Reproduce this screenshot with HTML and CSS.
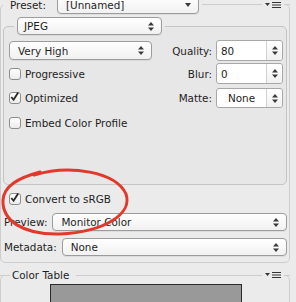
FILE: index.html
```html
<!DOCTYPE html>
<html lang="en">
<head>
<meta charset="UTF-8">
<meta name="viewport" content="width=device-width, initial-scale=1.0">
<title>Save for Web</title>
<link rel="stylesheet" href="styles.css">
</head>
<body>

<fieldset class="panel">
<legend class="bar">
<span class="label preset-label">Preset:</span>
<div class="select preset-select"><span>[Unnamed]</span>
<svg class="arrow" width="6" height="4" viewBox="0 0 6 4"><path d="M0 0h6L3 4z"/></svg>
</div>
<span class="rule"></span>
<svg class="menu" width="16" height="8" viewBox="0 0 16 8"><path d="M0 2h5L2.5 5z"/><path d="M7 1.5h9M7 4h9M7 6.5h9" stroke="#333" stroke-width="1.2"/></svg>
<span class="rule end"></span>
</legend>

<fieldset class="group">
<legend class="group-legend">
<div class="select format"><span>JPEG</span>
<svg class="updown" width="6" height="9" viewBox="0 0 6 9"><path d="M0 3.5h6L3 0zM0 5.5h6L3 9z"/></svg>
</div>
</legend>

<div class="options">
<div class="select quality-select"><span>Very High</span>
<svg class="updown" width="6" height="9" viewBox="0 0 6 9"><path d="M0 3.5h6L3 0zM0 5.5h6L3 9z"/></svg>
</div>
<span class="field-label">Quality:</span>
<div class="combo"><span class="val">80</span><span class="step"><svg class="updown" width="6" height="9" viewBox="0 0 6 9"><path d="M0 3.5h6L3 0zM0 5.5h6L3 9z"/></svg></span></div>

<label class="check-row"><span class="box"></span>Progressive</label>
<span class="field-label">Blur:</span>
<div class="combo"><span class="val">0</span><span class="step"><svg class="updown" width="6" height="9" viewBox="0 0 6 9"><path d="M0 3.5h6L3 0zM0 5.5h6L3 9z"/></svg></span></div>

<label class="check-row"><span class="box on"><svg width="12" height="12" viewBox="0 0 12 12"><path d="M2.5 6l2.5 3 5-8" fill="none" stroke="#2a2a2a" stroke-width="2"/></svg></span>Optimized</label>
<span class="field-label">Matte:</span>
<div class="combo matte"><span class="val">None</span><span class="step"><svg class="updown" width="6" height="9" viewBox="0 0 6 9"><path d="M0 3.5h6L3 0zM0 5.5h6L3 9z"/></svg></span></div>

<label class="check-row"><span class="box"></span>Embed Color Profile</label>
</div>
</fieldset>

<label class="check-row convert"><span class="box on"><svg width="12" height="12" viewBox="0 0 12 12"><path d="M2.5 6l2.5 3 5-8" fill="none" stroke="#2a2a2a" stroke-width="2"/></svg></span>Convert to sRGB</label>

<div class="line-row">
<span class="label">Preview:</span>
<div class="select wide"><span>Monitor Color</span>
<svg class="updown" width="6" height="9" viewBox="0 0 6 9"><path d="M0 3.5h6L3 0zM0 5.5h6L3 9z"/></svg>
</div>
</div>

<div class="line-row">
<span class="label">Metadata:</span>
<div class="select wide"><span>None</span>
<svg class="updown" width="6" height="9" viewBox="0 0 6 9"><path d="M0 3.5h6L3 0zM0 5.5h6L3 9z"/></svg>
</div>
</div>
</fieldset>

<fieldset class="panel table-panel">
<legend class="bar table-bar">
<span class="rule start"></span>
<span class="label table-title">Color Table</span>
<span class="rule"></span>
<svg class="menu" width="16" height="8" viewBox="0 0 16 8"><path d="M0 2h5L2.5 5z"/><path d="M7 1.5h9M7 4h9M7 6.5h9" stroke="#333" stroke-width="1.2"/></svg>
<span class="rule end"></span>
</legend>
<div class="swatch"></div>
</fieldset>

<svg class="circle" width="296" height="302" viewBox="0 0 296 302">
<path d="M34 175 C70 164 116 172 126 194 C133 214 104 232 60 234 C22 235 2 220 3 200 C4 186 18 178 40 172" fill="none" stroke="#e2392c" stroke-width="3" stroke-linecap="round"/>
</svg>

</body>
</html>
```

FILE: styles.css
```css
body {
    margin: 0;
    width: 296px;
    height: 302px;
    overflow: hidden;
    position: relative;
    background-color: #ebebeb;
    font-family: "DejaVu Sans", Verdana, sans-serif;
    font-size: 10.4px;
    color: #1e1e1e;
}

.panel {
    margin: -5px 6px 0 0;
    padding: 0 2px 6px 2px;
    border: 1px solid #cdcdcd;
    border-radius: 5px;
}

.bar {
    display: flex;
    align-items: center;
    width: 100%;
    box-sizing: border-box;
    padding: 0;
    height: 19px;
}

.rule {
    flex: 1;
    height: 0;
    border-top: 1px solid #cdcdcd;
    margin: 0 3px;
}

.rule.end {
    flex: none;
    width: 6px;
    margin-right: -3px;
}

.rule.start {
    flex: none;
    width: 10px;
    margin: 0 0 0 -3px;
}

.menu {
    fill: #333;
    flex: none;
}

.preset-label {
    margin-left: 7px;
    width: 47px;
}

.select {
    display: flex;
    align-items: center;
    justify-content: space-between;
    box-sizing: border-box;
    height: 18px;
    padding: 0 7px 0 8px;
    border: 1px solid #9c9c9c;
    border-radius: 4px;
    background: linear-gradient(#ffffff, #f1f1f1);
    box-shadow: 0 1px 0 rgba(0, 0, 0, 0.06);
}

.preset-select {
    width: 142px;
    height: 19px;
}

.arrow, .updown {
    fill: #3a3a3a;
    flex: none;
}

.group {
    margin: 3px 0 0 0;
    padding: 0 3px 49px 5px;
    border: 1px solid #c4c4c4;
    border-radius: 5px;
    background-color: #e7e7e7;
}

.group-legend {
    padding: 0 3px;
    margin-left: 5px;
}

.format {
    width: 145px;
    padding-left: 6px;
}

.options {
    display: grid;
    grid-template-columns: 143px 1fr 67px;
    grid-template-rows: 21px 23px 24px 24px;
    row-gap: 1px;
    align-items: center;
    margin-top: 5px;
}

.quality-select {
    height: 19px;
}

.field-label {
    text-align: right;
    padding-right: 4px;
}

.combo {
    display: flex;
    box-sizing: border-box;
    height: 21px;
    border: 1px solid #a8a8a8;
    border-radius: 3px;
    background-color: #fff;
}

.combo .val {
    flex: 1;
    display: flex;
    align-items: center;
    padding-left: 4px;
}

.combo .step {
    width: 15px;
    display: flex;
    align-items: center;
    justify-content: center;
    border-left: 1px solid #d0d0d0;
    background: linear-gradient(#ffffff, #f1f1f1);
    border-radius: 0 3px 3px 0;
}

.matte {
    height: 20px;
}

.matte .val {
    justify-content: center;
    padding-left: 0;
}

.check-row {
    display: flex;
    align-items: center;
    gap: 4px;
    height: 14px;
}

.box {
    width: 12px;
    height: 12px;
    box-sizing: border-box;
    border: 1px solid #8e8e8e;
    border-radius: 3px;
    background: linear-gradient(#ffffff, #ececec);
    display: flex;
}

.box svg {
    margin: -2px 0 0 -1px;
}

.convert {
    margin: 7px 0 0 6px;
}

.line-row {
    display: flex;
    align-items: center;
    gap: 5px;
    margin-top: 7px;
    margin-left: 1px;
}

.wide {
    flex: 1;
}

.table-panel {
    margin: 5px 6px 0 0;
    padding: 0 2px;
    height: 60px;
}

.table-bar {
    height: 14px;
}

.table-title {
    padding: 0 4px 0 2px;
}

.swatch {
    width: 192px;
    height: 30px;
    box-sizing: border-box;
    margin: 2px 0 0 47px;
    background-color: #999999;
    border: 1px solid #2a2a2a;
}

.circle {
    position: absolute;
    left: 0;
    top: 0;
    pointer-events: none;
}
```
